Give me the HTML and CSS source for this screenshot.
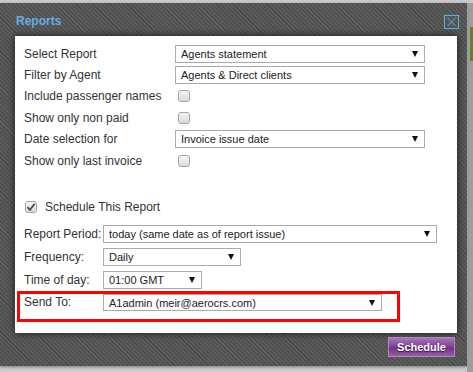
FILE: index.html
```html
<!DOCTYPE html>
<html>
<head>
<meta charset="utf-8">
<link rel="stylesheet" href="styles.css">
</head>
<body>
<div class="page">
  <div class="dialog">
    <div class="header">
      <span class="title">Reports</span>
      <span class="close"><svg width="15" height="14" viewBox="0 0 15 14"><rect x="0.5" y="0.5" width="14" height="13" fill="none" stroke="#5cb0e4" stroke-width="1"/><path d="M3.5 3 L11.5 11 M11.5 3 L3.5 11" stroke="#5cb0e4" stroke-width="1" fill="none"/></svg></span>
    </div>
    <div class="panel">
      <div class="section">
        <div class="row h21"><span class="lbl w151">Select Report</span><div class="select w250"><span>Agents statement</span><i class="arrow"></i></div></div>
        <div class="row h21"><span class="lbl w151">Filter by Agent</span><div class="select w250"><span>Agents &amp; Direct clients</span><i class="arrow"></i></div></div>
        <div class="row h22"><span class="lbl w151">Include passenger names</span><span class="cb cb-off"></span></div>
        <div class="row h21"><span class="lbl w151">Show only non paid</span><span class="cb cb-off"></span></div>
        <div class="row h22"><span class="lbl w151">Date selection for</span><div class="select w250"><span>Invoice issue date</span><i class="arrow"></i></div></div>
        <div class="row h22"><span class="lbl w151">Show only last invoice</span><span class="cb cb-off"></span></div>
      </div>
      <div class="sched-toggle">
        <span class="cb cb-on"><svg width="10" height="10" viewBox="0 0 10 10"><path d="M1.5 5.2 L4 7.8 L8.6 1.8" stroke="#4a4a4a" stroke-width="1.8" fill="none"/></svg></span>
        <span class="lbl">Schedule This Report</span>
      </div>
      <div class="section2">
        <div class="row h23"><span class="lbl w79">Report Period:</span><div class="select w334"><span>today (same date as of report issue)</span><i class="arrow"></i></div></div>
        <div class="row h23"><span class="lbl w79">Frequency:</span><div class="select w138"><span>Daily</span><i class="arrow"></i></div></div>
        <div class="row h23"><span class="lbl w79">Time of day:</span><div class="select w99"><span>01:00 GMT</span><i class="arrow"></i></div></div>
        <div class="highlight">
          <span class="lbl w79">Send To:</span><div class="select w279"><span>A1admin (meir@aerocrs.com)</span><i class="arrow"></i></div>
        </div>
      </div>
    </div>
    <div class="footer">
      <button class="btn">Schedule</button>
    </div>
  </div>
  <div class="side"><div class="side-green"></div></div>
</div>
</body>
</html>
```

FILE: styles.css
```css
* { box-sizing: border-box; }
html, body { margin: 0; padding: 0; }
body {
  background: #cbcbcb;
  font-family: "Liberation Sans", Arial, sans-serif;
  font-size: 12px;
  color: #333;
}
.page {
  display: flex;
  padding-top: 3px;
  height: 372px;
}
.dialog {
  width: 467px;
  height: 363px;
  background: repeating-linear-gradient(45deg, #4e4e4e 0 1.5px, #5d5d5d 1.5px 3px);
  box-shadow: 0 1px 3px rgba(0,0,0,0.4);
  display: flex;
  flex-direction: column;
}
.side {
  flex: 1;
  background: #9c9c9c;
  padding-top: 24px;
}
.side-green {
  margin-left: 3px;
  height: 34px;
  background: #63802f;
}
.header {
  height: 33px;
  display: flex;
  justify-content: space-between;
  align-items: flex-start;
  padding: 11px 8px 0 16px;
}
.title {
  color: #64ace6;
  font-weight: bold;
  font-size: 12px;
  line-height: 14px;
}
.close {
  display: block;
  margin-top: 1px;
  width: 15px;
  height: 14px;
}
.close svg { display: block; }
.panel {
  margin-left: 15px;
  width: 442px;
  height: 297px;
  background: #fff;
  box-shadow: 0 0 7px rgba(0,0,0,0.75);
  padding: 7px 0 0 9px;
}
.row {
  display: flex;
  align-items: center;
}
.h21 { height: 21px; }
.h22 { height: 22px; }
.h23 { height: 23px; }
.lbl {
  display: block;
  white-space: nowrap;
  line-height: 14px;
  color: #333;
}
.w151 { width: 151px; flex: none; }
.w79 { width: 79px; flex: none; }
.select {
  height: 18px;
  border: 1px solid #aaa;
  background: #fff;
  display: flex;
  align-items: center;
  justify-content: space-between;
  padding: 0 6px 0 5px;
  font-size: 11px;
  color: #222;
  flex: none;
}
.w250 { width: 250px; }
.w334 { width: 334px; }
.w138 { width: 138px; }
.w99 { width: 99px; }
.w279 { width: 279px; }
.arrow {
  display: block;
  width: 0;
  height: 0;
  border-left: 3.5px solid transparent;
  border-right: 3.5px solid transparent;
  border-top: 6px solid #111;
}
.cb {
  display: block;
  width: 12px;
  height: 12px;
  border: 1px solid #a3a3a3;
  border-radius: 3px;
  background: linear-gradient(#f6f6f6, #dadada);
  flex: none;
}
.cb-off { margin-left: 3px; }
.cb-on {
  display: flex;
  align-items: center;
  justify-content: center;
}
.cb-on svg { display: block; }
.sched-toggle {
  margin-top: 24px;
  height: 22px;
  display: flex;
  align-items: center;
  gap: 8px;
  padding-left: 1px;
}
.section2 {
  margin-top: 4px;
}
.highlight {
  margin-left: -7px;
  width: 383px;
  height: 31px;
  border: 3px solid #f00;
  padding: 0 0 0 4px;
  display: flex;
  align-items: flex-start;
}
.highlight .lbl { line-height: 17px; }
.highlight .select { height: 17px; }
.footer {
  display: flex;
  justify-content: flex-end;
  padding: 4px 12px 0 0;
}
.btn {
  width: 67px;
  height: 20px;
  border: 1px solid #b586c4;
  background: linear-gradient(#a676b8, #7a3f92 50%, #6e3386 55%, #93609f);
  color: #fff;
  font-family: "Liberation Sans", Arial, sans-serif;
  font-weight: bold;
  font-size: 11px;
  text-shadow: 0 1px 1px #3a1048;
  padding: 0;
  cursor: pointer;
}
```
